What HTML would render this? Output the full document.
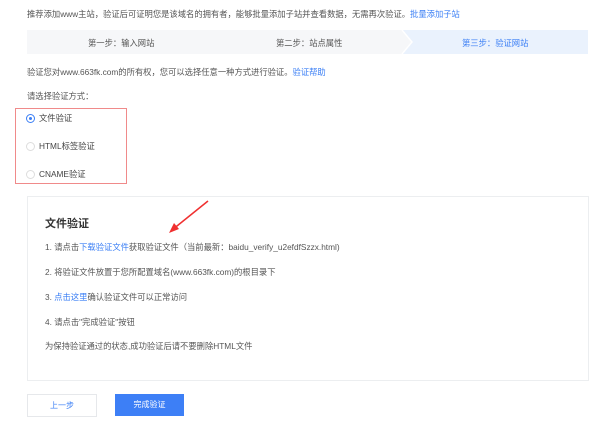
<!DOCTYPE html>
<html><head><meta charset="utf-8"><style>
body{margin:0;width:600px;height:437px;background:#fff;font-family:"Liberation Sans","Noto Sans CJK SC",sans-serif;font-size:8.3px;color:#555;position:relative;overflow:hidden}
.a{position:absolute;white-space:nowrap}
.l{color:#3b7ff5}
</style></head><body>
<div class="a" style="left:27px;top:8px">推荐添加www主站，验证后可证明您是该域名的拥有者，能够批量添加子站并查看数据，无需再次验证。<span class="l">批量添加子站</span></div>
<svg class="a" style="left:27px;top:30px" width="561" height="24">
<rect x="0" y="0" width="561" height="24" fill="#f6f7f9"/>
<polygon points="375,0 561,0 561,24 375,24 385,12" fill="#eaf2fd"/>
<polyline points="375,0 385,12 375,24" fill="none" stroke="#fff" stroke-width="1.5"/>
</svg>
<div class="a" style="left:88px;top:37px;color:#555">第一步：输入网站</div>
<div class="a" style="left:276px;top:37px;color:#555">第二步：站点属性</div>
<div class="a" style="left:462px;top:37px;color:#3b7ff5">第三步：验证网站</div>
<div class="a" style="left:27px;top:66px">验证您对www.663fk.com的所有权，您可以选择任意一种方式进行验证。<span class="l">验证帮助</span></div>
<div class="a" style="left:27px;top:90px">请选择验证方式：</div>
<div class="a" style="left:15px;top:108px;width:110px;height:74px;border:1px solid #f08a8a"></div>
<div class="a" style="left:26px;top:114px;width:7px;height:7px;border:1px solid #3b7ff5;border-radius:50%"><div style="margin:2px;width:3px;height:3px;border-radius:50%;background:#3b7ff5"></div></div>
<div class="a" style="left:39px;top:112px;color:#444">文件验证</div>
<div class="a" style="left:26px;top:142px;width:7px;height:7px;border:1px solid #ddd;border-radius:50%"></div>
<div class="a" style="left:39px;top:140px;color:#444">HTML标签验证</div>
<div class="a" style="left:26px;top:170px;width:7px;height:7px;border:1px solid #ddd;border-radius:50%"></div>
<div class="a" style="left:39px;top:168px;color:#444">CNAME验证</div>
<div class="a" style="left:27px;top:196px;width:560px;height:183px;border:1px solid #eceef0"></div>
<div class="a" style="left:45px;top:215px;font-size:11px;font-weight:bold;color:#333">文件验证</div>
<div class="a" style="left:45px;top:241px">1. 请点击<span class="l">下载验证文件</span>获取验证文件（当前最新：baidu_verify_u2efdfSzzx.html)</div>
<div class="a" style="left:45px;top:266px">2. 将验证文件放置于您所配置域名(www.663fk.com)的根目录下</div>
<div class="a" style="left:45px;top:291px">3. <span class="l">点击这里</span>确认验证文件可以正常访问</div>
<div class="a" style="left:45px;top:316px">4. 请点击"完成验证"按钮</div>
<div class="a" style="left:45px;top:340px">为保持验证通过的状态,成功验证后请不要删除HTML文件</div>
<svg class="a" style="left:160px;top:198px" width="52" height="40"><line x1="48" y1="3" x2="12" y2="32" stroke="#f03030" stroke-width="1.5"/><polygon points="9,35 14,25 19,31" fill="#f03030"/></svg>
<div class="a" style="left:27px;top:394px;width:68px;height:21px;border:1px solid #e6e8eb;color:#3b7ff5;text-align:center;line-height:21px;font-size:8px">上一步</div>
<div class="a" style="left:115px;top:394px;width:69px;height:22px;background:#3d7ff6;color:#fff;text-align:center;line-height:22px;font-size:8px">完成验证</div>
</body></html>
